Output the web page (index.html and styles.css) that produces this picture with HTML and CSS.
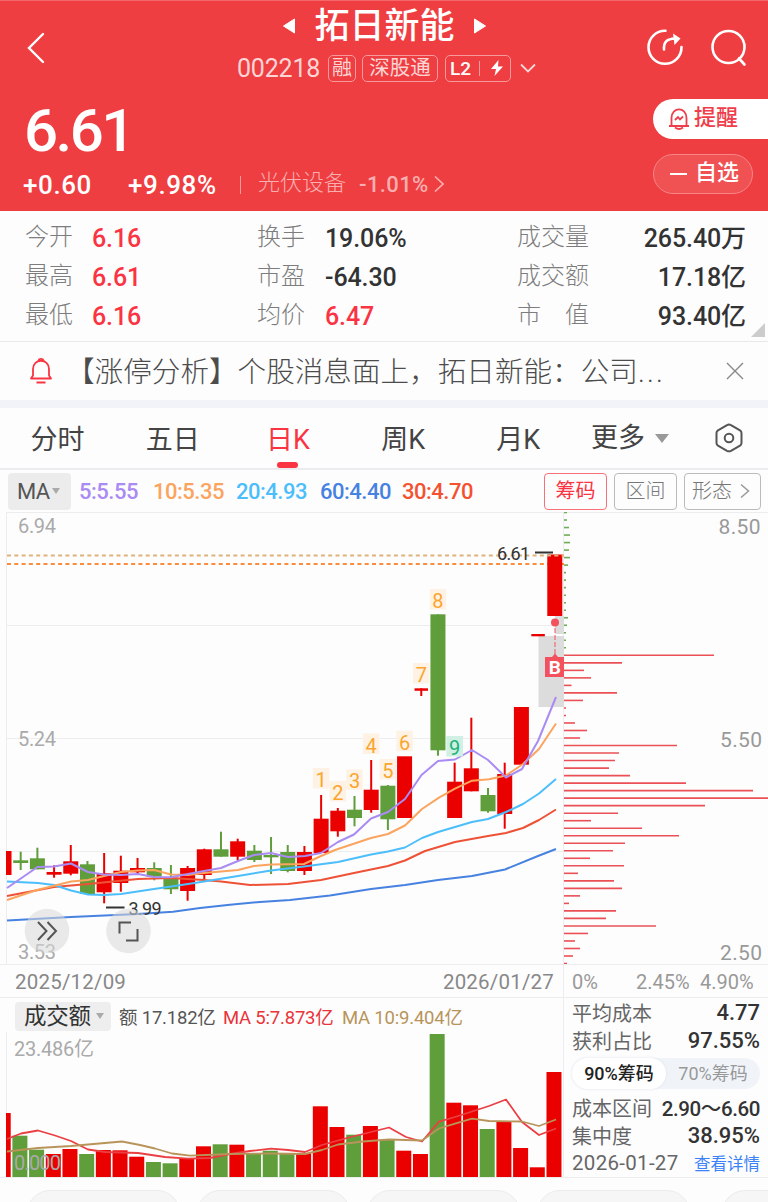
FILE: index.html
```
<!DOCTYPE html>
<html lang="zh-CN">
<head>
    <meta charset="UTF-8">
    <meta name="viewport" content="width=device-width, initial-scale=1.0">
    <title>拓日新能 002218</title>
    <link rel="stylesheet" href="styles.css">
</head>
<body>
    <header class="header">
        <div class="nav">
            <svg class="back" width="20" height="34" viewBox="0 0 20 34"><path d="M16 4L2 18L16 32"/></svg>
            <div class="stock">
                <div class="stock-name">
                    <svg width="12" height="16" viewBox="0 0 12 16"><path d="M11.500 1V15L.5 8Z"/></svg>
                    <span>拓日新能</span>
                    <svg width="12" height="16" viewBox="0 0 12 16"><path d="M.5 1V15L11.500 8Z"/></svg>
                </div>
                <div class="stock-tags">
                    <span class="code">002218</span>
                    <span class="tag">融</span>
                    <span class="tag tag-wide">深股通</span>
                    <span class="tag tag-l2"><b>L2</b><i></i><svg width="14" height="16" viewBox="0 0 14 16"><path d="M8.500 0L1 9H6L4.500 16L13 6.500H8Z"/></svg></span>
                    <svg class="down" width="16" height="10" viewBox="0 0 16 10"><path d="M1 1.500L8 8.500L15 1.500"/></svg>
                </div>
            </div>
            <div class="nav-icons">
                <svg width="38" height="38" viewBox="0 0 38 38"><path d="M18.500 1.800A16.500 16.500 0 1 0 34.500 18"/><path d="M17 20.500C16.500 12.500 20 10 28 9.500"/><path class="fill" d="M26 4.500L33.500 9.500L27.500 16Z"/></svg>
                <svg width="38" height="38" viewBox="0 0 38 38"><circle cx="17.500" cy="18" r="16"/><path d="M28 29.500L33.500 35.500"/></svg>
            </div>
        </div>
        <div class="summary">
            <div>
                <div class="price">6.61</div>
                <div class="change">
                    <span class="diff">+0.60</span>
                    <span class="rate">+9.98%</span>
                    <i></i>
                    <span class="sector">光伏设备</span>
                    <span class="sector-rate">-1.01%</span>
                    <svg width="10" height="18" viewBox="0 0 10 18"><path d="M1 1.500L9 9L1 16.500"/></svg>
                </div>
            </div>
            <div class="actions">
                <div class="remind">
                    <svg width="22" height="24" viewBox="0 0 22 24"><path d="M1 19H21M3.500 19V11C3.500 -.5 18.500 -.5 18.500 11V19"/><path d="M7 20.500Q11 23.500 15 20.500"/><path d="M7 13L10 10L12 12.500L15 9.500"/></svg>
                    <span>提醒</span>
                </div>
                <div class="watch"><i></i><span>自选</span></div>
            </div>
        </div>
    </header>

    <section class="stats">
        <span class="label">今开</span><span class="value up">6.16</span>
        <span class="label">换手</span><span class="value">19.06%</span>
        <span class="label">成交量</span><span class="value right">265.40万</span>
        <span class="label">最高</span><span class="value up">6.61</span>
        <span class="label">市盈</span><span class="value">-64.30</span>
        <span class="label">成交额</span><span class="value right">17.18亿</span>
        <span class="label">最低</span><span class="value up">6.16</span>
        <span class="label">均价</span><span class="value up">6.47</span>
        <span class="label spread"><span>市</span><span>值</span></span><span class="value right">93.40亿</span>
        <i class="corner"></i>
    </section>

    <section class="notice">
        <svg class="bell" width="24" height="28" viewBox="0 0 24 28"><path d="M2 21.500H22L20 18.500V12C20 1 4 1 4 12V18.500Z"/><path d="M9.500 3.500C10 1.300 14 1.300 14.500 3.500M7.500 25.500H16.500"/></svg>
        <span class="notice-text">【涨停分析】个股消息面上，拓日新能：公司<span class="dots">...</span></span>
        <svg class="close" width="18" height="18" viewBox="0 0 18 18"><path d="M1 1L17 17M17 1L1 17"/></svg>
    </section>

    <nav class="tabs">
        <span class="tab">分时</span>
        <span class="tab">五日</span>
        <span class="tab active">日K</span>
        <span class="tab">周K</span>
        <span class="tab">月K</span>
        <span class="more">更多<i class="caret"></i></span>
        <svg class="setting" width="30" height="30" viewBox="0 0 30 30"><path d="M15 1.500Q16 1.500 17 2.200L26 7.300Q27.500 8.200 27.500 10V20Q27.500 21.800 26 22.700L17 27.800Q15 28.800 13 27.800L4 22.700Q2.500 21.800 2.500 20V10Q2.500 8.200 4 7.300L13 2.200Q14 1.500 15 1.500Z"/><circle cx="15" cy="15" r="4.300"/></svg>
    </nav>

    <section class="toolbar">
        <span class="ma-btn">MA<i class="caret"></i></span>
        <span class="ma ma5">5:5.55</span>
        <span class="ma ma10">10:5.35</span>
        <span class="ma ma20">20:4.93</span>
        <span class="ma ma60">60:4.40</span>
        <span class="ma ma30">30:4.70</span>
        <span class="btn btn-on">筹码</span>
        <span class="btn">区间</span>
        <span class="btn btn-form">形态<svg width="10" height="16" viewBox="0 0 10 16"><path d="M1 1.500L8.500 8L1 14.500"/></svg></span>
    </section>

    <main class="charts">
        <div class="left">
            <svg class="kline" width="564" height="452" viewBox="0 512 564 452">
                <path class="grid" d="M6 512.500H564M6 625.500H564M6 738.500H564M6 851.500H564M6.500 512V964M563.500 512V964"/>
                <path class="gray" d="M538.500 636H564V707H538.500ZM555 616H564V634H555Z"/>
                <path class="limit soft" d="M7 555.500H564"/>
                <path class="limit" d="M7 564H564"/>
                <g id="candles"></g>
                <path class="limit soft" d="M547 555.500H564"/>
                <polyline class="line c60" points="7,920.5 71,917 138,914 173,911.700 200,908 230,904.700 260,902 290,900 330,895.500 371,889 405,885 438,880 472,876 505,869.500 538,856 556,849"/>
                <polyline class="line c30" points="7,896 54,887 88,884 138,879 171,878 204,880 221,881.500 250,885 288,884 321,880 354,873 388,866 405,860.500 425,851 455,842 488,836 506,833 523,828 539,820 556,809.500"/>
                <polyline class="line c20" points="7,881.500 38,883 54,885 71,890.500 88,894.500 104,895 121,894 154,889 188,884 204,881.500 238,876 271,870.500 304,866.500 338,862 371,854.500 388,851.500 405,847.500 422,838 438,832 472,822 488,819 506,812 523,804 539,793.500 556,779"/>
                <polyline class="line c10" points="7,900 37,890 71,881.500 88,880 104,876 121,872 138,870.500 154,870 171,874.500 188,875 204,873 238,870 254,866 271,864.500 304,864 321,856 335,850 371,838 388,834 405,825.500 422,809 439,797.700 455,788.700 472,780.700 489,779.300 506,775.500 523,764 539,749 556,723.500"/>
                <polyline class="line c5" points="7,888 37.500,867 54,866.500 71,863.500 88,872 104,874.500 121,875 138,874 154,877 171,877.300 188,874 204,871 221,868 238,861 254,855 271,853 288,857 305,856 321,853 338,842 354,834.500 371,818.500 388,812 405,799 421.500,775 438,761 455,759.500 472,750 488,760 506,777.500 522,769 538,741 556,697"/>
                <g id="marks"></g>
                <path class="tick" d="M535 552.500H553M106 907.500H124.500"/>
                <text class="price-tip" x="497" y="560" textLength="33">6.61</text>
                <text class="price-tip" x="128.500" y="915" textLength="33">3.99</text>
                <text class="axis" x="18" y="533" textLength="38">6.94</text>
                <text class="axis" x="18" y="746" textLength="38">5.24</text>
                <text class="axis" x="18" y="959" textLength="38">3.53</text>
                <circle class="float" cx="47" cy="931" r="22.300"/>
                <circle class="float" cx="128.500" cy="931" r="22.300"/>
                <path class="float-icon" d="M38 922L46.500 931L38 940M47.500 922L56 931L47.500 940M131 922.500H119.500V933.500M126 940.500H137.500V929"/>
                <circle class="buy-dot" cx="555" cy="622.500" r="4"/>
                <path class="buy-line" d="M555 628V655"/>
                <path class="buy" d="M545 657H552L555 653.500L558 657H564V677H545Z"/>
                <text class="buy-text" x="554.800" y="674">B</text>
            </svg>
            <div class="dates"><span>2025/12/09</span><span>2026/01/27</span></div>
            <div class="volume">
                <div class="volume-head">
                    <span class="vol-btn">成交额<i class="caret"></i></span>
                    <span class="v1">额 17.182亿</span>
                    <span class="v2">MA 5:7.873亿</span>
                    <span class="v3">MA 10:9.404亿</span>
                </div>
                <svg class="vol" width="564" height="146" viewBox="0 1032 564 146">
                    <path class="grid" d="M6.500 1032V1178M563.500 1032V1178M0 1177.500H564"/>
                    <g id="volumes"></g>
                    <polyline class="vline v5" points="7,1139 21,1133.500 38,1130.500 55,1135.500 71,1141 88,1149.500 105,1152 138,1153 165,1157 188,1158.700 210,1158 230,1154 250,1151 271,1148.700 288,1150 305,1152 322,1145 347,1138 363,1134 389,1127.500 406,1137 422,1141.500 439,1121.700 455,1117 472,1111.500 489,1106 506,1099.500 522,1122 539,1135 556,1128.500"/>
                    <polyline class="vline v10" points="7,1151.500 38,1148 71,1146 122,1141.500 140,1145 155,1148.500 172,1153.500 190,1155.700 230,1154 271,1153.500 305,1154 322,1150 338,1144.500 363,1141.500 389,1139.500 422,1140.500 439,1128.500 455,1123.700 472,1118.700 489,1121 522,1121.500 539,1126 556,1119.500"/>
                    <text class="axis" x="14" y="1056" textLength="80">23.486亿</text>
                    <text class="axis" x="14" y="1170" textLength="47">0.000</text>
                </svg>
            </div>
        </div>

        <div class="right">
            <svg class="chip" width="204" height="452" viewBox="564 512 204 452">
                <path class="grid" d="M564 512.500H768"/>
                <g id="chips"></g>
                <text class="axis dark" x="718.500" y="534" textLength="42">8.50</text>
                <text class="axis dark" x="720" y="747" textLength="42">5.50</text>
                <text class="axis dark" x="720" y="960" textLength="42">2.50</text>
            </svg>
            <div class="percents"><span>0%</span><span>2.45%</span><span>4.90%</span></div>
            <div class="cost">
                <div class="row"><span>平均成本</span><b>4.77</b></div>
                <div class="row"><span>获利占比</span><b>97.55%</b></div>
                <div class="switch"><span class="on">90%筹码</span><span>70%筹码</span></div>
                <div class="row"><span>成本区间</span><b class="range">2.90～6.60</b></div>
                <div class="row"><span>集中度</span><b>38.95%</b></div>
                <div class="row"><span class="day">2026-01-27</span><a class="detail">查看详情</a></div>
            </div>
        </div>
    </main>

    <footer class="chips-bar"><i></i><i></i><i></i><i></i><i class="last"></i></footer>

    <script src="chart.js"></script>
</body>
</html>
```
FILE: styles.css
```
* {
    box-sizing: border-box;
}
body {
    margin: 0;
    width: 768px;
    height: 1202px;
    overflow: hidden;
    background: #fdfdfe;
    font-family: Roboto, 'Noto Sans CJK SC', sans-serif;
    color: #333;
}
i {
    font-style: normal;
}
svg {
    display: block;
    flex: none;
    fill: none;
}
span, b {
    white-space: nowrap;
}

/* header */
.header {
    height: 211px;
    background: #ef3e41;
    border-top: 1px solid #f4686b;
    color: #fff;
}
.nav {
    display: grid;
    grid-template-columns: 237px 302px 229px;
    height: 94px;
}
.back {
    margin: 29px 0 0 27px;
    stroke: #fff;
    stroke-width: 2.4;
    stroke-linecap: round;
}
.stock-name {
    display: flex;
    justify-content: center;
    align-items: center;
    gap: 19px;
    height: 50px;
    margin-right: 7px;
    font-size: 35px;
    font-weight: 500;
}
.stock-name span {
    line-height: 50px;
    margin-top: 2px;
}
.stock-name svg {
    fill: #fff;
    stroke: #fff;
    stroke-linejoin: round;
}
.stock-tags {
    display: flex;
    align-items: center;
    height: 34px;
    color: #fbd5d6;
}
.code {
    width: 91px;
    font-size: 25px;
    line-height: 28px;
    padding-top: 2px;
    letter-spacing: -0.2px;
}
.tag {
    height: 27px;
    width: 28px;
    margin-right: 6px;
    border: 1.5px solid #f79a9c;
    border-radius: 5px;
    font-size: 20px;
    line-height: 25px;
    text-align: center;
}
.tag-wide {
    width: 76px;
    margin-right: 7px;
    font-size: 20.5px;
}
.tag-l2 {
    display: flex;
    align-items: center;
    width: 66px;
    padding-left: 4px;
    color: #fff;
}
.tag-l2 b {
    font-size: 19px;
    font-weight: 500;
}
.tag-l2 i {
    width: 1px;
    height: 15px;
    margin: 0 10px 0 8px;
    background: #f79a9c;
}
.tag-l2 svg {
    fill: #fff;
}
.down {
    margin-left: 3px;
    stroke: #fbd5d6;
    stroke-width: 1.8;
}
.nav-icons {
    display: flex;
    gap: 26px;
    padding: 28px 0 0 108px;
    stroke: #fff;
    stroke-width: 2.6;
    stroke-linecap: round;
}
.nav-icons .fill {
    fill: #fff;
    stroke: none;
}
.summary {
    display: flex;
    justify-content: space-between;
}
.price {
    height: 71px;
    padding-left: 24px;
    font-size: 60px;
    font-weight: 500;
    line-height: 71px;
    letter-spacing: -2.5px;
}
.change {
    display: flex;
    align-items: center;
    height: 38px;
    padding-left: 23px;
    font-size: 26px;
    font-weight: 500;
}
.diff {
    width: 105px;
    letter-spacing: 0.6px;
}
.rate {
    width: 112px;
    letter-spacing: 0.6px;
}
.change i {
    width: 1px;
    height: 18px;
    margin-right: 17px;
    background: #f79a9c;
}
.sector, .sector-rate {
    width: 101px;
    font-size: 22px;
    color: #f9aeaf;
}
.sector {
    font-weight: 300;
    line-height: 34px;
    margin-top: -4px;
}
.sector-rate {
    width: 75px;
    margin-top: -1px;
    letter-spacing: 0.4px;
}
.change svg {
    margin-top: -2px;
    stroke: #f9b1b2;
    stroke-width: 1.6;
}
.actions {
    width: 115px;
    padding-top: 4px;
    font-size: 22px;
    font-weight: 500;
}
.actions span {
    line-height: 36px;
    margin-top: -3px;
}
.remind {
    display: flex;
    align-items: center;
    height: 40px;
    padding-left: 15px;
    gap: 4px;
    border-radius: 20px 0 0 20px;
    background: #fff;
    color: #ef3e4b;
}
.remind svg {
    stroke: #ef3e4b;
    stroke-width: 1.8;
}
.watch {
    display: flex;
    align-items: center;
    width: 100px;
    height: 40px;
    margin-top: 15px;
    padding-left: 16px;
    border: 1px solid #f68588;
    border-radius: 20px;
    background: #f05153;
}
.watch i {
    width: 17px;
    height: 2px;
    margin-right: 8px;
    background: #fff;
}

/* quote figures */
.stats {
    position: relative;
    display: grid;
    grid-template-columns: 67px 165px 68px 192px 84px 145px;
    grid-auto-rows: 39px;
    height: 131px;
    padding: 8px 0 0 25px;
    border-bottom: 1px solid #e9e9ec;
    line-height: 39px;
}
.label {
    font-size: 24px;
    font-weight: 300;
    line-height: 37px;
    color: #7d7d7d;
}
.spread {
    display: flex;
    justify-content: space-between;
    width: 72px;
}
.value {
    font-size: 25px;
    font-weight: 500;
    letter-spacing: -0.1px;
}
.right.value {
    text-align: right;
}
.value.up {
    color: #fa3442;
}
.corner {
    position: absolute;
    right: 3px;
    bottom: 4px;
    border-left: 14px solid transparent;
    border-bottom: 14px solid #ccc;
}

/* notice */
.notice {
    display: flex;
    align-items: center;
    height: 66px;
    padding-left: 29px;
    border-bottom: 8px solid #f2f3f8;
}
.bell {
    stroke: #fa3442;
    stroke-width: 1.8;
    stroke-linejoin: round;
}
.notice-text {
    width: 673px;
    padding: 3px 0 0 13px;
    font-size: 28.6px;
    font-weight: 300;
    line-height: 55px;
    color: #4c4c4c;
}
.dots {
    letter-spacing: 2.2px;
}
.close {
    stroke: #888;
    stroke-width: 1.4;
}

/* period tabs */
.tabs {
    display: flex;
    height: 62px;
    border-bottom: 2px solid #ececee;
    font-size: 27px;
    line-height: 64px;
    color: #444;
}
.tab {
    position: relative;
    width: 115.2px;
    text-align: center;
}
.tab.active {
    color: #fa3442;
}
.tab.active::after {
    content: '';
    position: absolute;
    left: 47px;
    bottom: 0;
    width: 21px;
    height: 6px;
    border-radius: 3px;
    background: #fa3442;
}
.more {
    display: flex;
    align-items: center;
    width: 138px;
    padding-left: 15px;
}
.caret {
    margin-left: 10px;
    border: 7px solid transparent;
    border-top: 9px solid #999;
    border-bottom: 0;
}
.setting {
    margin-top: 15px;
    stroke: #555;
    stroke-width: 2;
}

/* indicator row */
.toolbar {
    display: flex;
    align-items: center;
    height: 42px;
    padding-left: 8px;
    font-size: 22px;
}
.ma-btn {
    display: flex;
    align-items: center;
    width: 63px;
    height: 37px;
    margin-right: 8px;
    padding-left: 9px;
    border-radius: 4px;
    background: #ececec;
    color: #555;
    letter-spacing: -0.6px;
}
.ma-btn .caret, .vol-btn .caret {
    margin-left: 2px;
    border-width: 6px 4.5px 0;
    border-top-color: #aaa;
}
.ma {
    width: 83px;
    font-weight: 500;
    letter-spacing: -0.5px;
}
.ma5 {
    width: 74px;
    color: #a98bf3;
}
.ma10 {
    color: #fba45e;
}
.ma20 {
    width: 84px;
    color: #4cbefb;
}
.ma60 {
    width: 82px;
    color: #4782e0;
}
.ma30 {
    width: 142px;
    color: #f5502f;
}
.btn {
    width: 63px;
    height: 37px;
    margin-right: 7px;
    border: 1.5px solid #bbb;
    border-radius: 4px;
    font-size: 20px;
    font-weight: 300;
    line-height: 35px;
    text-align: center;
    color: #777;
}
.btn-on {
    border-color: #f7707a;
    font-weight: 400;
    color: #fa3442;
}
.btn-form {
    display: flex;
    align-items: center;
    width: 77px;
    margin-right: 0;
    padding-left: 7px;
}
.btn-form svg {
    margin-left: 8px;
    stroke: #999;
    stroke-width: 1.5;
}

/* charts */
.charts {
    display: grid;
    grid-template-columns: 564px 204px;
}
.grid {
    stroke: #ededef;
}
.gray {
    fill: #dcdcdc;
}
.limit {
    stroke: #fb8c3c;
    stroke-width: 2;
    stroke-dasharray: 4 3.3;
}
.limit.soft {
    stroke: #dfb27c;
}
.red {
    fill: #eb0000;
}
.green {
    fill: #5f9e3b;
}
.line {
    stroke-width: 2;
    stroke-linejoin: round;
}
.c5 { stroke: #a98bf3; }
.c10 { stroke: #fba45e; }
.c20 { stroke: #4cbefb; }
.c30 { stroke: #ee5236; }
.c60 { stroke: #4782e0; }
.mark {
    fill: #fef2e4;
}
.mark-text {
    fill: #fba52e;
    font-size: 20px;
    text-anchor: middle;
}
.mark.nine {
    fill: #d0f0e3;
}
.mark-text.nine {
    fill: #1db37b;
}
.tick {
    stroke: #333;
    stroke-width: 2;
}
.price-tip {
    fill: #333;
    font-size: 18px;
}
.axis {
    fill: #aaa;
    font-size: 20px;
}
.axis.dark {
    fill: #999;
    font-size: 21px;
}
.float {
    fill: #d8d8d8;
    fill-opacity: 0.55;
}
.float-icon {
    stroke: #555;
    stroke-width: 2;
}
.buy-dot, .buy {
    fill: #f2515d;
}
.buy-line {
    stroke: #f2515d;
    stroke-dasharray: 5 2;
}
.buy-text {
    fill: #fff;
    font-size: 19px;
    font-weight: 700;
    text-anchor: middle;
}
.dates {
    display: flex;
    justify-content: space-between;
    height: 34px;
    padding: 0 9px 0 15px;
    border: 1px solid #ededef;
    border-left: 0;
    font-size: 20.5px;
    line-height: 35px;
    letter-spacing: 0.2px;
    color: #888;
}
.volume-head {
    display: flex;
    align-items: center;
    height: 34px;
    padding: 2px 0 0 15px;
    border-right: 1px solid #ededef;
    font-size: 18.5px;
    letter-spacing: -0.2px;
}
.vol-btn {
    display: flex;
    align-items: center;
    width: 96px;
    height: 29px;
    margin-right: 8px;
    padding-left: 9px;
    border-radius: 4px;
    background: #eee;
    font-size: 22.5px;
    line-height: 28px;
    color: #333;
}
.vol-btn .caret {
    margin-left: 5px;
}
.v1 {
    width: 104px;
    color: #555;
}
.v2 {
    width: 119px;
    color: #ea3438;
}
.v3 {
    color: #b8945a;
}
.vline {
    stroke-width: 1.8;
    stroke-linejoin: round;
}
.v5 { stroke: #ea4044; }
.v10 { stroke: #b8945a; }
.chip line {
    stroke: #ea5055;
    stroke-width: 1.6;
}
.chip line.high {
    stroke: #6fae55;
}
.percents {
    display: grid;
    grid-template-columns: 64px 64px auto;
    height: 34px;
    padding-left: 8px;
    border: 1px solid #ededef;
    border-width: 1px 0;
    font-size: 20px;
    line-height: 35px;
    color: #999;
}
.cost {
    height: 180px;
    padding: 0 8px;
    border-bottom: 1px solid #ededef;
    font-size: 20px;
}
.row {
    display: flex;
    justify-content: space-between;
    align-items: center;
    height: 28px;
    color: #666;
}
.row b {
    font-size: 22px;
    font-weight: 500;
    color: #333;
}
.row .range {
    font-size: 20.5px;
    letter-spacing: -0.4px;
}
.day {
    font-size: 20.5px;
    letter-spacing: 0.3px;
}
.detail {
    font-size: 16.5px;
    color: #3b82f7;
}
.switch {
    display: flex;
    height: 31px;
    margin: 4px 0;
    border-radius: 16px;
    background: #f0f4f9;
    font-size: 18px;
    line-height: 31px;
    color: #999;
}
.switch span {
    width: 94px;
    text-align: center;
}
.switch .on {
    border-radius: 16px;
    background: #fff;
    box-shadow: 0 0 3px #dde2ea;
    font-weight: 500;
    color: #222;
}

/* cards peeking in at the bottom */
.chips-bar {
    display: flex;
    gap: 17px;
    height: 24px;
    padding: 12px 0 0 27px;
}
.chips-bar i {
    width: 153px;
    height: 46px;
    border: 1px solid #ececec;
    border-radius: 23px;
    background: #f6f6f6;
}
.chips-bar .last {
    width: 46px;
    margin-left: 15px;
    border-right: 0;
    border-radius: 23px 0 0 23px;
}
```
FILE: chart.js
```
const NS = 'http://www.w3.org/2000/svg';
const STEP = 16.69;

// [color, bodyTop, bodyBottom, high, low, volumeTop]
const days = [
    ['red', 851, 875, 851, 875, 1113],
    ['green', 860.3, 863, 851.7, 870, 1135.7],
    ['green', 858.3, 869.3, 847.7, 869.3, 1149.7],
    ['red', 872, 874.7, 865.3, 877.7, 1154],
    ['red', 861.3, 873.7, 845, 875.3, 1149],
    ['green', 864.3, 894, 861, 894, 1154],
    ['red', 873.3, 892.3, 853, 903.3, 1150],
    ['red', 870.7, 883, 855.7, 891.7, 1150.3],
    ['red', 868, 872.3, 858, 875, 1156.7],
    ['green', 868, 876.7, 862.3, 880.3, 1162],
    ['green', 877.7, 889.3, 865, 894, 1163.3],
    ['red', 868, 891, 866, 900.7, 1158.3],
    ['red', 849.3, 875, 848.7, 879.3, 1146.3],
    ['green', 849.3, 856.7, 831.7, 856.7, 1144.3],
    ['red', 841.3, 856.7, 838.7, 860.7, 1144.7],
    ['green', 850.7, 860, 845, 862, 1153],
    ['green', 855, 857.3, 837, 874, 1150.7],
    ['green', 852, 871, 845, 872.3, 1154],
    ['red', 852, 871, 846, 875, 1153.3],
    ['red', 818.7, 853, 795, 853, 1106.3],
    ['red', 810.7, 831.3, 808, 836.7, 1127],
    ['green', 809.7, 818, 796, 826.3, 1134.7],
    ['red', 789.7, 810, 760, 812.7, 1126],
    ['green', 785.7, 819.3, 785, 830, 1139.7],
    ['red', 756.3, 818, 756.3, 818, 1150.7],
    ['red', 688.3, 690.8, 688.3, 696, 1154],
    ['green', 614.3, 750.3, 614.3, 755.7, 1034],
    ['red', 781.7, 818, 762.7, 818, 1102.7],
    ['red', 768.3, 791.3, 717.7, 791.3, 1105.3],
    ['green', 795, 811.3, 788, 812.7, 1129],
    ['red', 774, 814, 762.7, 828.7, 1121.7],
    ['red', 707, 764.7, 707, 764.7, 1148],
    ['red', 634, 636.3, 634, 636.3, 1167.3],
    ['red', 554.5, 616, 554.5, 616, 1072]
];

// [day, top of the box]
const marks = [[19, 768], [20, 781], [21, 769.3], [22, 733.5], [23, 759], [24, 730.7], [25, 663], [26, 589], [27, 736]];

const chips = [
    3, 3, 5, 6, 6, 5, 6, 4, 2, 2, 2, 2, 2, 2, 4, 3, 2, 2, 2,
    150, 58, 20, 27, 7.5, 53, 19, 2, 2, 11, 23, 16, 113, 55, 51, 45, 66, 122, 189, 204,
    141, 54, 27, 78, 115, 61, 49, 26, 60, 14, 50, 58, 16, 5, 52, 42, 92, 24, 11, 16, 9, 3
];

function add(parent, name, attrs, text) {
    const el = document.createElementNS(NS, name);
    for (const key in attrs) {
        el.setAttribute(key, attrs[key]);
    }
    if (text) {
        el.textContent = text;
    }
    document.getElementById(parent).appendChild(el);
}

function bar(parent, color, center, width, top, bottom) {
    const x = Math.max(center - width / 2, 6);
    add(parent, 'rect', { class: color, x: x, y: top, width: center + width / 2 - x, height: bottom - top });
}

days.forEach(([color, top, bottom, high, low, volume], i) => {
    const x = 20.7 + (i - 1) * STEP;
    const flat = bottom - top < 2.6 && high === top;
    bar('candles', color, x, flat ? 13.5 : 15, top, bottom);
    if (i > 0 && low - high > bottom - top) {
        bar('candles', color, x, 2, high, low);
    }
    bar('volumes', color, x - 0.8, 15, volume, 1177);
});

marks.forEach(([day, top], i) => {
    const x = 20.7 + (day - 1) * STEP;
    const nine = i === 8 ? ' nine' : '';
    add('marks', 'rect', { class: 'mark' + nine, x: x - 8.3, y: top, width: 16.6, height: 20.5 });
    add('marks', 'text', { class: 'mark-text' + nine, x: x, y: top + 19 }, String(i + 1));
});

chips.forEach((length, i) => {
    const y = 512.5 + i * 7.517;
    add('chips', 'line', { class: i < 19 ? 'high' : 'low', x1: 564, x2: 564 + length, y1: y, y2: y });
});
```
